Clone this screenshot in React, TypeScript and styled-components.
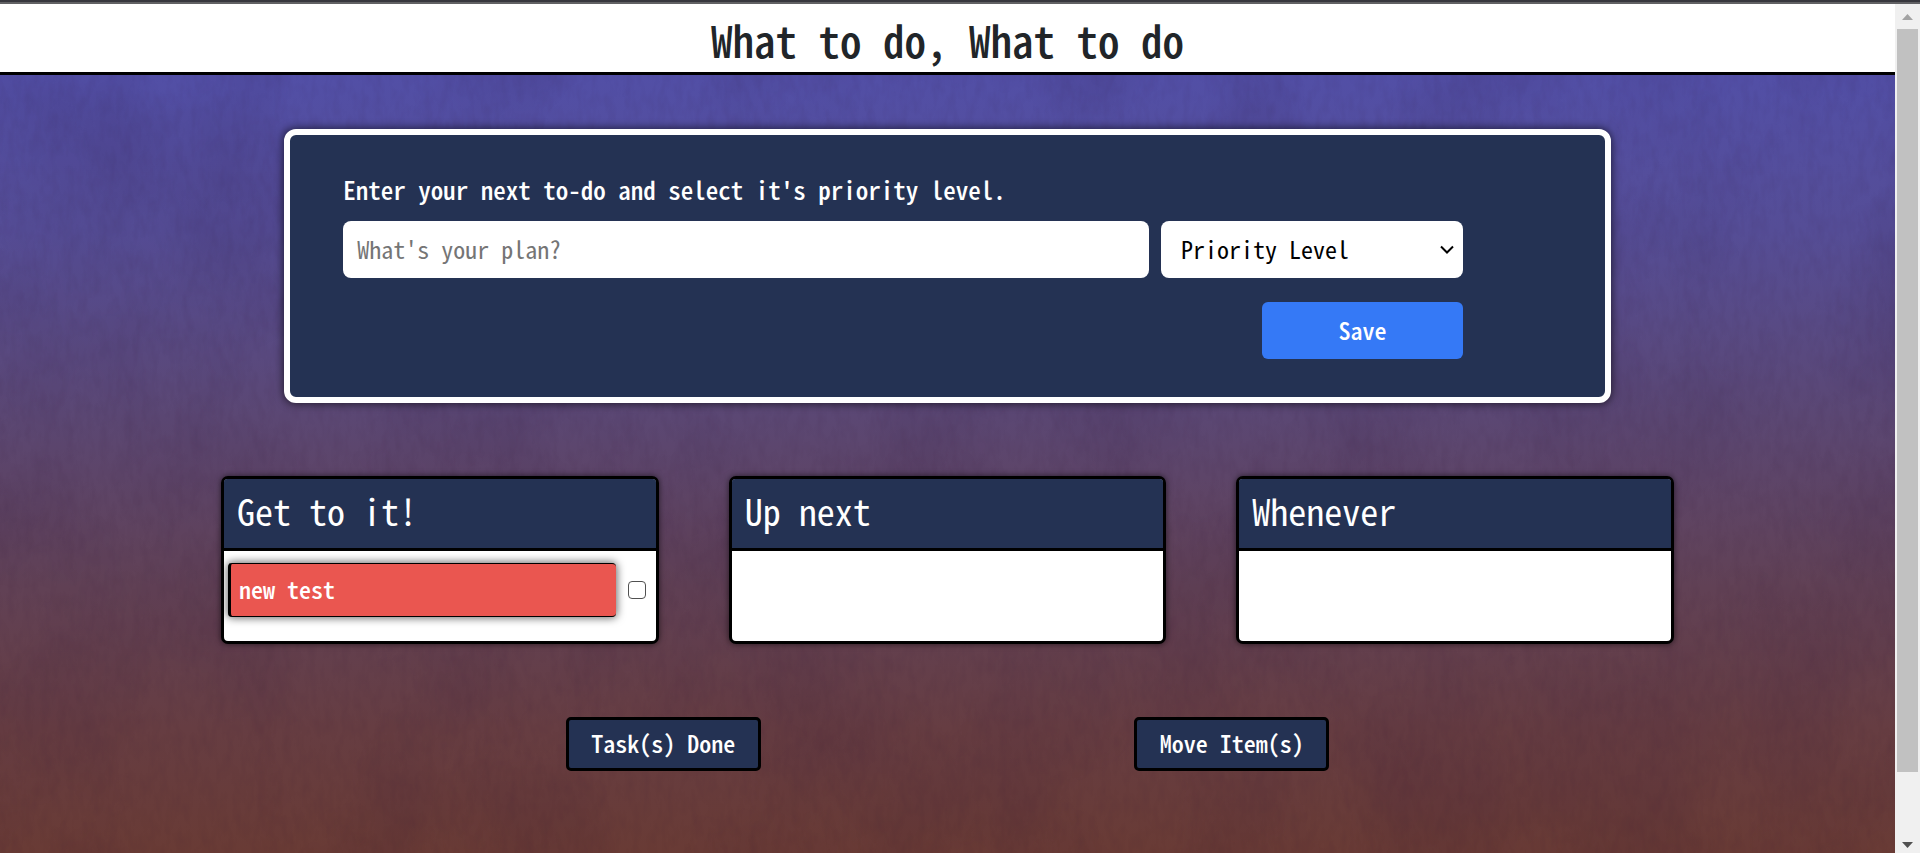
import React, { useState } from "react";
import styled, { createGlobalStyle } from "styled-components";

const GlobalStyle = createGlobalStyle`
  * { box-sizing: border-box; }
  html, body, #root { height: 100%; }
  body {
    margin: 0;
    overflow: hidden;
    color: #212529;
    font-family: "Noto Sans CJK JP", monospace;
    font-feature-settings: "hwid";
    font-size: 24px;
    line-height: 36px;
  }
  button, input, select {
    font: inherit;
    font-feature-settings: inherit;
  }
`;

const Window = styled.div`
  height: 100vh;
  display: grid;
  grid-template-columns: minmax(0, 1fr) 25px;
  border-top: 2px solid #37373d;
`;

const Page = styled.div`
  border-top: 2px solid #616164;
  display: flex;
  flex-direction: column;
  min-height: 0;
`;

const Header = styled.header`
  flex: none;
  padding: 8px 0 6px;
  background: #fff;
  border-bottom: 3px solid #000;
  text-align: center;
`;

const Title = styled.h1`
  margin: 0;
  font-size: 43px;
  line-height: 54px;
  font-weight: 500;
`;

const Main = styled.main`
  position: relative;
  flex: 1;
  min-height: 0;
  padding-top: 54px;
  overflow: hidden;
  background: linear-gradient(#524fa6 0%, #554d96 20%, #5b4773 44%, #614155 66%, #663d42 84%, #693b35 100%);
`;

const Texture = styled.svg`
  position: absolute;
  inset: 0;
  width: 100%;
  height: 100%;
`;

const Content = styled.div`
  position: relative;
  display: flex;
  flex-direction: column;
  align-items: center;
`;

const EntryForm = styled.form`
  width: 70%;
  min-height: 274px;
  padding: 36px 53px;
  display: flex;
  flex-wrap: wrap;
  align-items: start;
  align-content: start;
  background: #243253;
  border: 6px solid #fff;
  border-radius: 12px;
  box-shadow: 0 0 8px 1px rgba(0, 0, 0, 0.6);
`;

const Prompt = styled.label`
  width: 100%;
  margin-bottom: 14px;
  color: #fff;
  font-size: 25px;
  font-weight: 500;
`;

const PlanInput = styled.input`
  width: calc(100% * 2 / 3);
  height: 57px;
  margin-right: 12px;
  padding: 0 14px 2px;
  border: 0;
  border-radius: 8px;
  background: #fff;
  &::placeholder { color: #757575; opacity: 1; }
`;

const SelectBox = styled.div`
  position: relative;
  width: 25%;
  height: 57px;
  svg {
    position: absolute;
    right: 9px;
    top: 24px;
    pointer-events: none;
  }
`;

const PrioritySelect = styled.select`
  appearance: none;
  width: 100%;
  height: 100%;
  padding: 0 20px 2px;
  border: 0;
  border-radius: 8px;
  background: #fff;
  color: #000;
`;

const SaveRow = styled.div`
  width: calc(100% * 11 / 12 + 12px);
  margin-top: 24px;
  display: flex;
  justify-content: flex-end;
`;

const SaveButton = styled.button`
  width: 201px;
  height: 57px;
  padding: 0 0 2px;
  border: 0;
  border-radius: 6px;
  background: #3579f6;
  color: #fff;
  font-weight: 500;
`;

const Board = styled.div`
  width: 77%;
  padding: 0 3px;
  margin-top: 73px;
  display: grid;
  grid-template-columns: repeat(3, minmax(0, 1fr));
  gap: 70px;
`;

const Column = styled.section`
  min-height: 168px;
  background: #fff;
  border: 3px solid #000;
  border-radius: 7px;
  box-shadow: 0 0 6px 0 rgba(0, 0, 0, 0.6);
`;

const ColumnTitle = styled.h2`
  margin: 0;
  padding: 4px 13px 11px;
  background: #243253;
  border-bottom: 3px solid #000;
  border-radius: 3px 3px 0 0;
  color: #fff;
  font-size: 36px;
  line-height: 54px;
  font-weight: 400;
`;

const TaskList = styled.ul`
  margin: 0;
  padding: 12px 4px;
  list-style: none;
`;

const TaskRow = styled.li`
  display: flex;
  align-items: center;
`;

const TaskLabel = styled.label`
  flex: 1;
  padding: 7px 8px 9px;
  border: solid #000;
  border-width: 1px 0 1px 3px;
  border-radius: 4px;
  background: #ea5650;
  box-shadow: 0 0 8px 1px rgba(0, 0, 0, 0.6);
  color: #fff;
  font-weight: 500;
`;

const TaskCheck = styled.input`
  appearance: none;
  width: 18px;
  height: 18px;
  margin: 0 6px 0 12px;
  border: 1px solid #505050;
  border-radius: 4px;
  background: #fff;
  &:checked { background: #3579f6; }
`;

const Actions = styled.div`
  width: 60%;
  margin-top: 73px;
  display: flex;
  justify-content: space-around;
`;

const ActionButton = styled.button`
  min-width: 195px;
  height: 54px;
  padding: 0 22px 2px;
  border: 3px solid #000;
  border-radius: 5px;
  background: #243253;
  color: #fff;
  font-weight: 500;
`;

const ScrollTrack = styled.div`
  display: flex;
  flex-direction: column;
  align-items: center;
  border-top: 2px solid #616164;
  background: #f0f0f0;
`;

const ScrollArrow = styled.svg`
  flex: none;
  width: 11px;
  height: 25px;
`;

const ThumbArea = styled.div`
  flex: 1;
  width: 21px;
  min-height: 0;
`;

const ScrollThumb = styled.div`
  height: 93%;
  background: #c1c1c1;
`;

const columns = [
  { title: "Get to it!", tasks: ["new test"] },
  { title: "Up next", tasks: [] },
  { title: "Whenever", tasks: [] },
];

export default function App() {
  const [plan, setPlan] = useState("");
  return (
    <>
      <GlobalStyle />
      <Window>
        <Page>
          <Header>
            <Title>What to do, What to do</Title>
          </Header>
          <Main>
            <Texture aria-hidden="true">
              <filter id="stains" x="0" y="0" width="100%" height="100%" colorInterpolationFilters="sRGB">
                <feTurbulence type="fractalNoise" baseFrequency="0.007 0.005" numOctaves="7" seed="8" />
                <feColorMatrix values="0 0 0 0 0.15  0 0 0 0 0.05  0 0 0 0 0.2  1.8 0 0 0 -0.75" />
              </filter>
              <filter id="fibres" x="0" y="0" width="100%" height="100%" colorInterpolationFilters="sRGB">
                <feTurbulence type="fractalNoise" baseFrequency="0.12 0.05" numOctaves="3" seed="3" />
                <feColorMatrix values="0 0 0 0 0.15  0 0 0 0 0.04  0 0 0 0 0.15  1.5 0 0 0 -0.6" />
              </filter>
              <rect width="100%" height="100%" filter="url(#stains)" opacity="0.16" />
              <rect width="100%" height="100%" filter="url(#fibres)" opacity="0.08" />
            </Texture>
            <Content>
              <EntryForm onSubmit={(e) => e.preventDefault()}>
                <Prompt htmlFor="plan">Enter your next to-do and select it's priority level.</Prompt>
                <PlanInput id="plan" placeholder="What's your plan?" value={plan} onChange={(e) => setPlan(e.target.value)} />
                <SelectBox>
                  <PrioritySelect aria-label="Priority Level" defaultValue="">
                    <option value="">Priority Level</option>
                    <option>Get to it!</option>
                    <option>Up next</option>
                    <option>Whenever</option>
                  </PrioritySelect>
                  <svg width="14" height="10" viewBox="0 0 14 10" fill="none" stroke="#000" strokeWidth="2">
                    <path d="M1 1.5 7 7.5 13 1.5" />
                  </svg>
                </SelectBox>
                <SaveRow>
                  <SaveButton type="submit">Save</SaveButton>
                </SaveRow>
              </EntryForm>
              <Board>
                {columns.map((column) => (
                  <Column key={column.title}>
                    <ColumnTitle>{column.title}</ColumnTitle>
                    <TaskList>
                      {column.tasks.map((task) => (
                        <TaskRow key={task}>
                          <TaskLabel htmlFor="task-0">{task}</TaskLabel>
                          <TaskCheck id="task-0" type="checkbox" />
                        </TaskRow>
                      ))}
                    </TaskList>
                  </Column>
                ))}
              </Board>
              <Actions>
                <ActionButton type="button">Task(s) Done</ActionButton>
                <ActionButton type="button">Move Item(s)</ActionButton>
              </Actions>
            </Content>
          </Main>
        </Page>
        <ScrollTrack aria-hidden="true">
          <ScrollArrow viewBox="0 0 11 25"><path d="M0 16 5.5 10 11 16Z" fill="#a3a3a3" /></ScrollArrow>
          <ThumbArea><ScrollThumb /></ThumbArea>
          <ScrollArrow viewBox="0 0 11 25"><path d="M0 14 5.5 20 11 14Z" fill="#505050" /></ScrollArrow>
        </ScrollTrack>
      </Window>
    </>
  );
}
